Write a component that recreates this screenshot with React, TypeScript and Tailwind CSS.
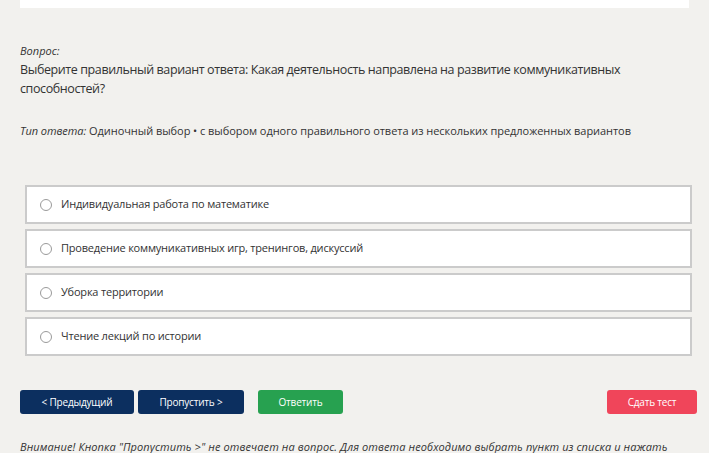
const options = [
  "Индивидуальная работа по математике",
  "Проведение коммуникативных игр, тренингов, дискуссий",
  "Уборка территории",
  "Чтение лекций по истории",
];

export default function App() {
  return (
    <div
      className="h-[453px] w-[709px] overflow-hidden bg-[#f2f1ee] text-[#333]"
      style={{ fontFamily: '"Open Sans", "Noto Sans", sans-serif' }}
    >
      <div className="mx-[20px] h-[8px] bg-white" />

      <div className="px-[20px] pt-[36px]">
        <div className="text-[11px] italic leading-[14px]">Вопрос:</div>
        <div className="mt-[2px] text-[12.5px] leading-[19px] tracking-[-0.4px]">
          Выберите правильный вариант ответа: Какая деятельность направлена на развитие коммуникативных
          <br />
          способностей?
        </div>

        <div className="mt-[26px] text-[11px] leading-[14px] tracking-[-0.05px]">
          <span className="italic">Тип ответа:</span> Одиночный выбор • с выбором одного правильного ответа из нескольких предложенных вариантов
        </div>
      </div>

      <div className="mt-[47px] flex flex-col gap-[5px] pl-[25px] pr-[17px]">
        {options.map((o) => (
          <label
            key={o}
            className="flex h-[39px] items-center border-2 border-[#cbcbcb] bg-white pl-[13px]"
          >
            <span className="h-[12px] w-[12px] rounded-full border border-[#9a9a9a] bg-white" />
            <span className="ml-[9px] text-[11px] tracking-[-0.2px]">{o}</span>
          </label>
        ))}
      </div>

      <div className="mt-[34px] flex items-center pl-[20px] pr-[12px] text-[10px] tracking-[-0.2px] text-white">
        <button className="h-[24px] w-[114px] rounded-[3px] bg-[#0c2f5f]">&lt; Предыдущий</button>
        <button className="ml-[4px] h-[24px] w-[106px] rounded-[3px] bg-[#0c2f5f]">Пропустить &gt;</button>
        <button className="ml-[14px] h-[24px] w-[85px] rounded-[3px] bg-[#27a150]">Ответить</button>
        <button className="ml-auto h-[24px] w-[90px] rounded-[3px] bg-[#f0455a]">Сдать тест</button>
      </div>

      <div className="mt-[26px] whitespace-nowrap px-[20px] text-[11px] italic leading-[14px] tracking-[0.1px]">
        Внимание! Кнопка "Пропустить &gt;" не отвечает на вопрос. Для ответа необходимо выбрать пункт из списка и нажать
      </div>
    </div>
  );
}
